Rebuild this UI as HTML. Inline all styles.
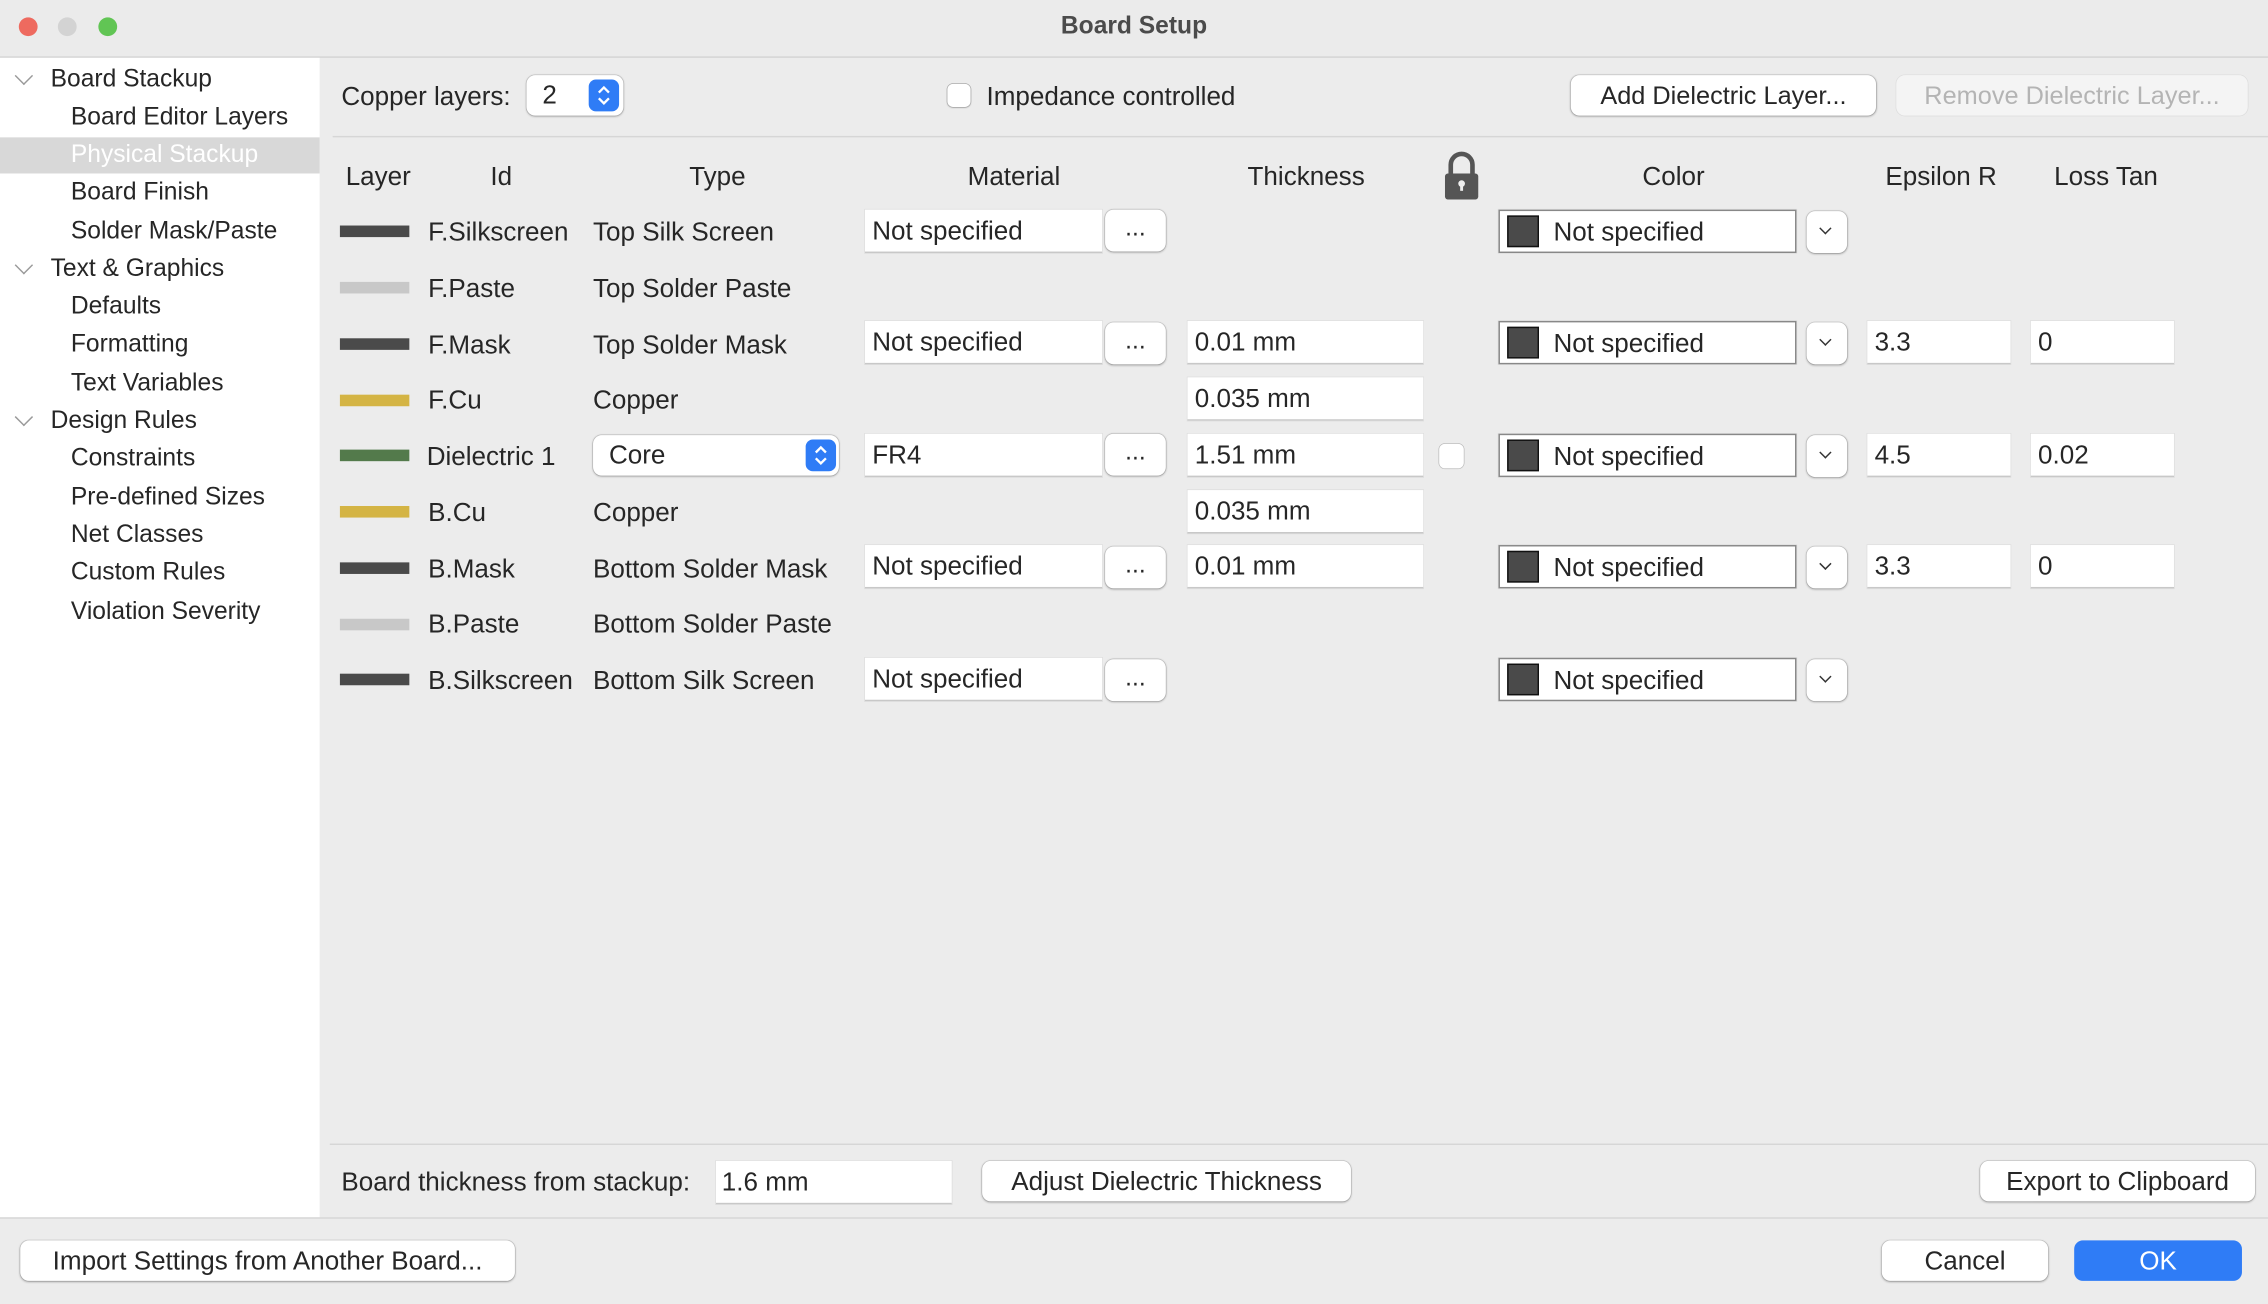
<!DOCTYPE html>
<html><head><meta charset="utf-8"><style>
html,body{margin:0;padding:0;width:2268px;height:1304px;overflow:hidden;background:#ececec}
#w{position:absolute;left:0;top:0;width:1568px;height:902px;transform:scale(1.44643,1.4457);transform-origin:0 0;font-family:"Liberation Sans",sans-serif;font-size:17px;color:#262626;background:#ececec}
.a{position:absolute;white-space:nowrap}
.t{position:absolute;white-space:nowrap;transform:translateY(-50%)}
.box{position:absolute;background:#fff;border-bottom:1px solid #c8c8c8;box-shadow:0 0 0 .5px #ddd}
.btn{position:absolute;background:#fff;border-radius:6px;box-shadow:0 0.5px 1.5px rgba(0,0,0,.3),0 0 0 .5px rgba(0,0,0,.12);text-align:center}
.sw{position:absolute;width:48px;height:8px}
.cs{position:absolute;width:22px;height:22px;background:#4a4a4a;border:1.5px solid #111;box-sizing:border-box}
.chev{position:absolute;width:7px;height:7px;border-right:1.5px solid #333;border-bottom:1.5px solid #333;transform:rotate(45deg)}
.tc{position:absolute;width:8px;height:8px;border-right:1.3px solid #9a9a9a;border-bottom:1.3px solid #9a9a9a;transform:rotate(45deg)}
.hd{position:absolute;top:112px;transform:translateX(-50%);font-size:18px}
</style></head><body><div id="w">
<!-- title bar -->
<div class="a" style="left:0;top:0;width:1568px;height:39px;background:#ebebeb;border-bottom:1px solid #d4d4d4"></div>
<div class="a" style="left:13px;top:12px;width:13px;height:13px;border-radius:50%;background:#ee6a5f"></div>
<div class="a" style="left:40px;top:12px;width:13px;height:13px;border-radius:50%;background:#d3d3d3"></div>
<div class="a" style="left:68px;top:12px;width:13px;height:13px;border-radius:50%;background:#61c554"></div>
<div class="a" style="left:0;width:1568px;top:8px;text-align:center;font-weight:bold;font-size:17px;color:#4b4b4b">Board Setup</div>
<!-- sidebar -->
<div class="a" style="left:0;top:40px;width:221px;height:802px;background:#fff"></div>
<div class="a" style="left:0;top:95px;width:221px;height:25px;background:#d8d8d8"></div>
<div class="tc" style="left:12px;top:48px"></div>
<div class="tc" style="left:12px;top:179px"></div>
<div class="tc" style="left:12px;top:284px"></div>
<div class="t" style="left:35px;top:55px">Board Stackup</div>
<div class="t" style="left:49px;top:81px">Board Editor Layers</div>
<div class="t" style="left:49px;top:107px;color:#fff">Physical Stackup</div>
<div class="t" style="left:49px;top:133px">Board Finish</div>
<div class="t" style="left:49px;top:160px">Solder Mask/Paste</div>
<div class="t" style="left:35px;top:186px">Text &amp; Graphics</div>
<div class="t" style="left:49px;top:212px">Defaults</div>
<div class="t" style="left:49px;top:238px">Formatting</div>
<div class="t" style="left:49px;top:265px">Text Variables</div>
<div class="t" style="left:35px;top:291px">Design Rules</div>
<div class="t" style="left:49px;top:317px">Constraints</div>
<div class="t" style="left:49px;top:344px">Pre-defined Sizes</div>
<div class="t" style="left:49px;top:370px">Net Classes</div>
<div class="t" style="left:49px;top:396px">Custom Rules</div>
<div class="t" style="left:49px;top:423px">Violation Severity</div>
<!-- top controls -->
<div class="t" style="left:236px;top:67px;font-size:18px">Copper layers:</div>
<div class="btn" style="left:364px;top:52px;width:67px;height:28px"></div>
<div class="t" style="left:375px;top:66px;font-size:18px">2</div>
<div class="a" style="left:407px;top:55px;width:21px;height:22px;border-radius:5px;background:#2f7cf6"></div>
<svg class="a" style="left:407px;top:55px" width="21" height="22"><path d="M7 9l3.5-3.5L14 9M7 13l3.5 3.5L14 13" stroke="#fff" stroke-width="1.6" fill="none"/></svg>
<div class="a" style="left:655px;top:58px;width:16px;height:16px;background:#fff;border-radius:4px;box-shadow:0 0 0 .5px #aaa,0 .5px 1px rgba(0,0,0,.2)"></div>
<div class="t" style="left:682px;top:67px;font-size:18px">Impedance controlled</div>
<div class="btn" style="left:1086px;top:52px;width:211px;height:28px;line-height:28px;font-size:17.5px">Add Dielectric Layer...</div>
<div class="btn" style="left:1311px;top:52px;width:243px;height:28px;line-height:28px;font-size:17.5px;color:#b4b4b4;background:#f4f4f4;box-shadow:0 0 0 .5px #ddd">Remove Dielectric Layer...</div>
<div class="a" style="left:230px;top:94px;width:1338px;height:1px;background:#d6d6d6"></div>
<!-- headers -->
<div class="a" style="left:239px;top:112px;font-size:18px">Layer</div>
<div class="a" style="left:339px;top:112px;font-size:18px">Id</div>
<div class="hd" style="left:496px">Type</div>
<div class="hd" style="left:701px">Material</div>
<div class="hd" style="left:903px">Thickness</div>
<svg class="a" style="left:997px;top:104px" width="27" height="34"><path d="M6 17V10a7.5 7.5 0 0 1 15 0v7" stroke="#555" stroke-width="3.2" fill="none"/><rect x="2" y="16" width="23" height="18" rx="2" fill="#555"/><circle cx="13.5" cy="23" r="2.3" fill="#eee"/><rect x="12.5" y="23" width="2" height="5" fill="#eee"/></svg>
<div class="hd" style="left:1157px">Color</div>
<div class="hd" style="left:1342px">Epsilon R</div>
<div class="hd" style="left:1456px">Loss Tan</div>
<!-- rows -->
<div class="sw" style="left:235px;top:156px;background:#4a4a4a"></div>
<div class="sw" style="left:235px;top:195px;background:#c8c8c8"></div>
<div class="sw" style="left:235px;top:234px;background:#4a4a4a"></div>
<div class="sw" style="left:235px;top:273px;background:#d4b444"></div>
<div class="sw" style="left:235px;top:311px;background:#537a4b"></div>
<div class="sw" style="left:235px;top:350px;background:#d4b444"></div>
<div class="sw" style="left:235px;top:389px;background:#4a4a4a"></div>
<div class="sw" style="left:235px;top:428px;background:#c8c8c8"></div>
<div class="sw" style="left:235px;top:466px;background:#4a4a4a"></div>
<div class="t" style="left:296px;top:161px;font-size:18px">F.Silkscreen</div>
<div class="t" style="left:296px;top:200px;font-size:18px">F.Paste</div>
<div class="t" style="left:296px;top:239px;font-size:18px">F.Mask</div>
<div class="t" style="left:296px;top:277px;font-size:18px">F.Cu</div>
<div class="t" style="left:295px;top:316px;font-size:18px">Dielectric 1</div>
<div class="t" style="left:296px;top:355px;font-size:18px">B.Cu</div>
<div class="t" style="left:296px;top:394px;font-size:18px">B.Mask</div>
<div class="t" style="left:296px;top:432px;font-size:18px">B.Paste</div>
<div class="t" style="left:296px;top:471px;font-size:18px">B.Silkscreen</div>
<div class="t" style="left:410px;top:161px;font-size:18px">Top Silk Screen</div>
<div class="t" style="left:410px;top:200px;font-size:18px">Top Solder Paste</div>
<div class="t" style="left:410px;top:239px;font-size:18px">Top Solder Mask</div>
<div class="t" style="left:410px;top:277px;font-size:18px">Copper</div>
<div class="btn" style="left:410px;top:301px;width:170px;height:28px"></div>
<div class="t" style="left:421px;top:315px;font-size:18px">Core</div>
<div class="a" style="left:557px;top:304px;width:21px;height:22px;border-radius:5px;background:#2f7cf6"></div>
<svg class="a" style="left:557px;top:304px" width="21" height="22"><path d="M7 9l3.5-3.5L14 9M7 13l3.5 3.5L14 13" stroke="#fff" stroke-width="1.6" fill="none"/></svg>
<div class="t" style="left:410px;top:355px;font-size:18px">Copper</div>
<div class="t" style="left:410px;top:394px;font-size:18px">Bottom Solder Mask</div>
<div class="t" style="left:410px;top:432px;font-size:18px">Bottom Solder Paste</div>
<div class="t" style="left:410px;top:471px;font-size:18px">Bottom Silk Screen</div>

<!-- material -->
<div class="box" style="left:598px;top:145px;width:164px;height:29px"></div><div class="t" style="left:603px;top:160px;font-size:18px">Not specified</div><div class="btn" style="left:764px;top:145px;width:42px;height:29px;line-height:26px">...</div>
<div class="box" style="left:598px;top:222px;width:164px;height:29px"></div><div class="t" style="left:603px;top:237px;font-size:18px">Not specified</div><div class="btn" style="left:764px;top:223px;width:42px;height:29px;line-height:26px">...</div>
<div class="box" style="left:598px;top:300px;width:164px;height:29px"></div><div class="t" style="left:603px;top:315px;font-size:18px">FR4</div><div class="btn" style="left:764px;top:300px;width:42px;height:29px;line-height:26px">...</div>
<div class="box" style="left:598px;top:377px;width:164px;height:29px"></div><div class="t" style="left:603px;top:392px;font-size:18px">Not specified</div><div class="btn" style="left:764px;top:378px;width:42px;height:29px;line-height:26px">...</div>
<div class="box" style="left:598px;top:455px;width:164px;height:29px"></div><div class="t" style="left:603px;top:470px;font-size:18px">Not specified</div><div class="btn" style="left:764px;top:456px;width:42px;height:29px;line-height:26px">...</div>
<!-- thickness -->
<div class="box" style="left:821px;top:222px;width:163px;height:29px"></div><div class="t" style="left:826px;top:237px;font-size:18px">0.01 mm</div>
<div class="box" style="left:821px;top:261px;width:163px;height:29px"></div><div class="t" style="left:826px;top:276px;font-size:18px">0.035 mm</div>
<div class="box" style="left:821px;top:300px;width:163px;height:29px"></div><div class="t" style="left:826px;top:315px;font-size:18px">1.51 mm</div>
<div class="box" style="left:821px;top:339px;width:163px;height:29px"></div><div class="t" style="left:826px;top:354px;font-size:18px">0.035 mm</div>
<div class="box" style="left:821px;top:377px;width:163px;height:29px"></div><div class="t" style="left:826px;top:392px;font-size:18px">0.01 mm</div>
<div class="a" style="left:995px;top:307px;width:17px;height:17px;background:#fff;border-radius:4px;box-shadow:0 0 0 .5px #bbb"></div>
<!-- color -->
<div class="box" style="left:1036px;top:145px;width:206px;height:29px;border:1px solid #888;box-sizing:border-box;height:30px"></div><div class="cs" style="left:1042px;top:149px"></div><div class="t" style="left:1074px;top:161px;font-size:18px">Not specified</div><div class="btn" style="left:1249px;top:146px;width:28px;height:29px"></div><div class="chev" style="left:1259px;top:155px;width:5px;height:5px"></div>
<div class="box" style="left:1036px;top:222px;width:206px;height:30px;border:1px solid #888;box-sizing:border-box"></div><div class="cs" style="left:1042px;top:226px"></div><div class="t" style="left:1074px;top:238px;font-size:18px">Not specified</div><div class="btn" style="left:1249px;top:223px;width:28px;height:29px"></div><div class="chev" style="left:1259px;top:232px;width:5px;height:5px"></div>
<div class="box" style="left:1036px;top:300px;width:206px;height:30px;border:1px solid #888;box-sizing:border-box"></div><div class="cs" style="left:1042px;top:304px"></div><div class="t" style="left:1074px;top:316px;font-size:18px">Not specified</div><div class="btn" style="left:1249px;top:301px;width:28px;height:29px"></div><div class="chev" style="left:1259px;top:310px;width:5px;height:5px"></div>
<div class="box" style="left:1036px;top:377px;width:206px;height:30px;border:1px solid #888;box-sizing:border-box"></div><div class="cs" style="left:1042px;top:381px"></div><div class="t" style="left:1074px;top:393px;font-size:18px">Not specified</div><div class="btn" style="left:1249px;top:378px;width:28px;height:29px"></div><div class="chev" style="left:1259px;top:387px;width:5px;height:5px"></div>
<div class="box" style="left:1036px;top:455px;width:206px;height:30px;border:1px solid #888;box-sizing:border-box"></div><div class="cs" style="left:1042px;top:459px"></div><div class="t" style="left:1074px;top:471px;font-size:18px">Not specified</div><div class="btn" style="left:1249px;top:456px;width:28px;height:29px"></div><div class="chev" style="left:1259px;top:465px;width:5px;height:5px"></div>
<!-- eps / loss -->
<div class="box" style="left:1291px;top:222px;width:99px;height:29px"></div><div class="t" style="left:1296px;top:237px;font-size:18px">3.3</div>
<div class="box" style="left:1404px;top:222px;width:99px;height:29px"></div><div class="t" style="left:1409px;top:237px;font-size:18px">0</div>
<div class="box" style="left:1291px;top:300px;width:99px;height:29px"></div><div class="t" style="left:1296px;top:315px;font-size:18px">4.5</div>
<div class="box" style="left:1404px;top:300px;width:99px;height:29px"></div><div class="t" style="left:1409px;top:315px;font-size:18px">0.02</div>
<div class="box" style="left:1291px;top:377px;width:99px;height:29px"></div><div class="t" style="left:1296px;top:392px;font-size:18px">3.3</div>
<div class="box" style="left:1404px;top:377px;width:99px;height:29px"></div><div class="t" style="left:1409px;top:392px;font-size:18px">0</div>
<!-- bottom of panel -->
<div class="a" style="left:228px;top:791px;width:1340px;height:1px;background:#d6d6d6"></div>
<div class="t" style="left:236px;top:818px;font-size:18px">Board thickness from stackup:</div>
<div class="box" style="left:495px;top:803px;width:163px;height:29px"></div><div class="t" style="left:499px;top:818px;font-size:18px">1.6 mm</div>
<div class="btn" style="left:679px;top:803px;width:255px;height:28px;line-height:28px;font-size:18px">Adjust Dielectric Thickness</div>
<div class="btn" style="left:1369px;top:803px;width:190px;height:28px;line-height:28px;font-size:18px">Export to Clipboard</div>
<div class="a" style="left:0;top:842px;width:1568px;height:1px;background:#d6d6d6"></div>
<div class="btn" style="left:14px;top:858px;width:342px;height:28px;line-height:28px;font-size:18px">Import Settings from Another Board...</div>
<div class="btn" style="left:1301px;top:858px;width:115px;height:28px;line-height:28px;font-size:18px">Cancel</div>
<div class="btn" style="left:1434px;top:858px;width:116px;height:28px;line-height:28px;font-size:18px;background:#2f7cf6;color:#fff;box-shadow:none">OK</div>
</div></body></html>
